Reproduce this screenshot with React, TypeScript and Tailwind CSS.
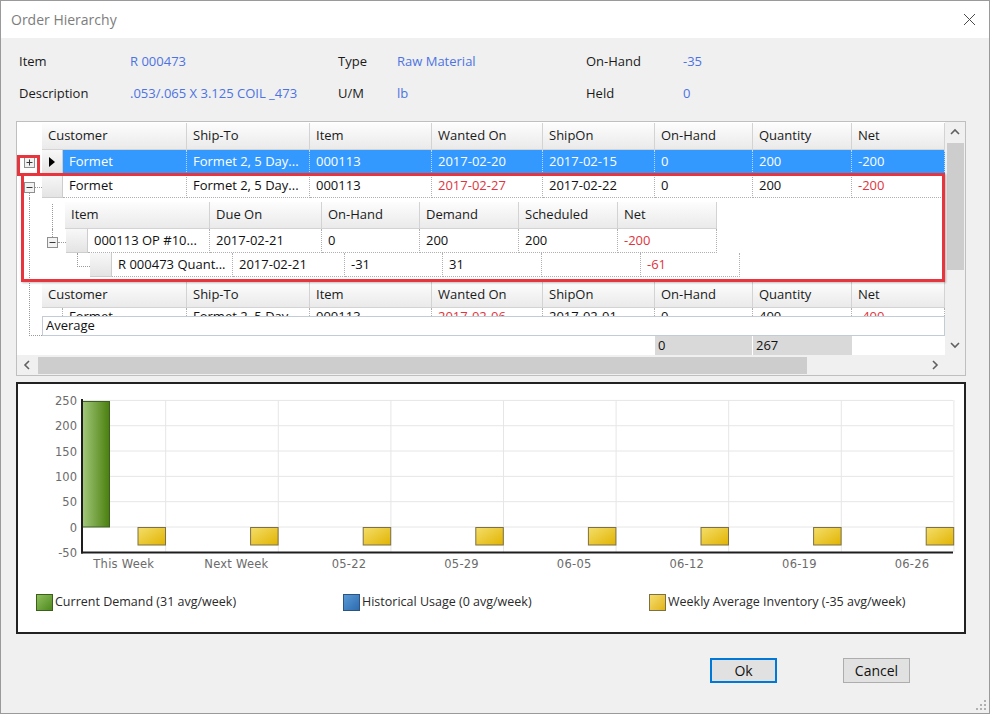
import React from "react";

const MAIN_W = ["w-[145px]", "w-[123px]", "w-[122px]", "w-[111px]", "w-[112px]", "w-[98px]", "w-[99px]", "w-[93px]"];
const DATA_W = ["w-[124px]", "w-[123px]", "w-[122px]", "w-[111px]", "w-[112px]", "w-[98px]", "w-[99px]", "w-[93px]"];
const MAIN_H = ["Customer", "Ship-To", "Item", "Wanted On", "ShipOn", "On-Hand", "Quantity", "Net"];
const CHILD_HW = ["w-[145px]", "w-[112px]", "w-[98px]", "w-[99px]", "w-[99px]", "w-[99px]"];
const CHILD_H = ["Item", "Due On", "On-Hand", "Demand", "Scheduled", "Net"];
const CHILD_W = ["w-[122px]", "w-[112px]", "w-[98px]", "w-[99px]", "w-[99px]", "w-[99px]"];
const GRAND_W = ["w-[121px]", "w-[112px]", "w-[98px]", "w-[99px]", "w-[99px]", "w-[99px]"];

type Cell = { t: string; red?: boolean };

const ROW1: Cell[] = [
  { t: "Formet" }, { t: "Formet 2, 5 Day..." }, { t: "000113" }, { t: "2017-02-20" },
  { t: "2017-02-15" }, { t: "0" }, { t: "200" }, { t: "-200" },
];
const ROW2: Cell[] = [
  { t: "Formet" }, { t: "Formet 2, 5 Day..." }, { t: "000113" }, { t: "2017-02-27", red: true },
  { t: "2017-02-22" }, { t: "0" }, { t: "200" }, { t: "-200", red: true },
];
const ROW3: Cell[] = [
  { t: "Formet" }, { t: "Formet 2, 5 Day..." }, { t: "000113" }, { t: "2017-02-06", red: true },
  { t: "2017-02-01" }, { t: "0" }, { t: "400" }, { t: "-400", red: true },
];
const CHILD: Cell[] = [
  { t: "000113 OP #10..." }, { t: "2017-02-21" }, { t: "0" }, { t: "200" }, { t: "200" }, { t: "-200", red: true },
];
const GRAND: Cell[] = [
  { t: "R 000473 Quant..." }, { t: "2017-02-21" }, { t: "-31" }, { t: "31" }, { t: "" }, { t: "-61", red: true },
];

function HCell({ w, children }: { w: string; children: React.ReactNode }) {
  return (
    <div
      className={`${w} shrink-0 h-full flex items-center pl-[6px] bg-linear-to-b from-[#fdfdfd] to-[#eaeaea] border-r border-b border-[#d3d3d3] whitespace-nowrap overflow-hidden text-[#1a1a1a]`}
    >
      {children}
    </div>
  );
}

function DCell({ w, c, sel }: { w: string; c: Cell; sel?: boolean }) {
  return (
    <div
      className={`${w} shrink-0 h-full flex items-center pl-[6px] border-r border-b border-dotted whitespace-nowrap overflow-hidden ${
        sel ? "border-[#b8dafc] text-white" : "border-[#b0b0b0]"
      } ${c.red ? "text-[#e0343c]" : ""}`}
    >
      {c.t}
    </div>
  );
}

function Indicator({ w, children }: { w: string; children?: React.ReactNode }) {
  return (
    <div
      className={`${w} shrink-0 h-full flex items-center justify-center bg-linear-to-b from-[#f8f8f8] to-[#e4e4e4] border-r border-b border-[#cdcdcd]`}
    >
      {children}
    </div>
  );
}

function Expander({ plus }: { plus?: boolean }) {
  return (
    <svg width="11" height="11" viewBox="0 0 11 11" className="block shrink-0">
      <rect x="0.5" y="0.5" width="10" height="10" fill="#f2f2f2" stroke="#8f8f8f" />
      <line x1="2.5" y1="5.5" x2="8.5" y2="5.5" stroke="#3a3a3a" />
      {plus && <line x1="5.5" y1="2.5" x2="5.5" y2="8.5" stroke="#3a3a3a" />}
    </svg>
  );
}

function Chev({ dir }: { dir: "up" | "down" | "left" | "right" }) {
  const pts: Record<string, string> = {
    up: "1,6 5,2 9,6",
    down: "1,2 5,6 9,2",
    left: "6,1 2,5 6,9",
    right: "2,1 6,5 2,9",
  };
  const vert = dir === "up" || dir === "down";
  return (
    <svg width={vert ? 10 : 8} height={vert ? 8 : 10} viewBox={vert ? "0 0 10 8" : "0 0 8 10"} className="block">
      <polyline points={pts[dir]} fill="none" stroke="#606060" strokeWidth="1.6" />
    </svg>
  );
}

function TitleBar() {
  return (
    <div className="h-[37px] shrink-0 bg-white flex items-center justify-between pl-[10px] pr-[13px]">
      <span className="text-[14px] text-[#7d7d7d]">Order Hierarchy</span>
      <svg width="13" height="13" viewBox="0 0 13 13" className="block">
        <line x1="1" y1="1" x2="12" y2="12" stroke="#4a4a4a" strokeWidth="1" />
        <line x1="12" y1="1" x2="1" y2="12" stroke="#4a4a4a" strokeWidth="1" />
      </svg>
    </div>
  );
}

function Info() {
  const blue = "text-[#4d73e3]";
  return (
    <div className="pt-[8px] pl-[18px] shrink-0 text-[#1a1a1a]">
      <div className="h-[32px] flex items-center">
        <span className="w-[111px]">Item</span>
        <span className={`w-[208px] ${blue}`}>R 000473</span>
        <span className="w-[59px]">Type</span>
        <span className={`w-[189px] ${blue}`}>Raw Material</span>
        <span className="w-[97px]">On-Hand</span>
        <span className={blue}>-35</span>
      </div>
      <div className="h-[32px] flex items-center">
        <span className="w-[111px]">Description</span>
        <span className={`w-[208px] ${blue}`}>.053/.065 X 3.125 COIL _473</span>
        <span className="w-[59px]">U/M</span>
        <span className={`w-[189px] ${blue}`}>lb</span>
        <span className="w-[97px]">Held</span>
        <span className={blue}>0</span>
      </div>
    </div>
  );
}

function Grid() {
  return (
    <div className="mt-[11px] ml-[15px] w-[950px] h-[255px] shrink-0 border border-[#bfbfbf] bg-white flex flex-col">
      <div className="flex h-[233px]">
        <div className="w-[928px] h-full flex flex-col overflow-hidden">
          {/* header */}
          <div className="flex h-[27px] mt-[1px] shrink-0">
            <div className="w-[25px] shrink-0" />
            {MAIN_H.map((h, i) => (
              <HCell key={h + i} w={MAIN_W[i]}>{h}</HCell>
            ))}
          </div>
          {/* row 1 selected */}
          <div className="flex h-[24px] shrink-0">
            <div className="w-[25px] shrink-0 flex items-center pl-[7px]">
              <Expander plus />
            </div>
            <Indicator w="w-[21px]">
              <svg width="6" height="10" viewBox="0 0 6 10" className="block">
                <polygon points="0,0 6,5 0,10" fill="#000" />
              </svg>
            </Indicator>
            <div className="flex h-full bg-[#3399ff]">
              {ROW1.map((c, i) => (
                <DCell key={i} w={DATA_W[i]} c={c} sel />
              ))}
            </div>
          </div>
          {/* row 2 */}
          <div className="flex h-[24px] shrink-0">
            <div className="w-[25px] shrink-0 flex flex-col">
              <div className="h-[8px]" />
              <div className="flex items-center pl-[7px]">
                <Expander />
                <div className="w-[7px] border-t border-dotted border-[#9a9a9a]" />
              </div>
              <div className="ml-[12px] flex-1 border-l border-dotted border-[#9a9a9a]" />
            </div>
            <Indicator w="w-[21px]" />
            {ROW2.map((c, i) => (
              <DCell key={i} w={DATA_W[i]} c={c} />
            ))}
          </div>
          {/* lower block */}
          <div className="flex flex-1">
            <div className="w-[25px] shrink-0">
              <div className="ml-[12px] w-[13px] h-[138px] border-l border-b border-dotted border-[#9a9a9a]" />
            </div>
            <div className="w-[903px] flex flex-col">
              {/* child band */}
              <div className="h-[84px] shrink-0 flex flex-col pt-[4px]">
                <div className="flex h-[27px] shrink-0">
                  <div className="w-[23px] shrink-0 flex flex-col">
                    <div className="ml-[10px] mt-[2px] flex-1 border-l border-dotted border-[#9a9a9a]" />
                  </div>
                  {CHILD_H.map((h, i) => (
                    <HCell key={h + i} w={CHILD_HW[i]}>{h}</HCell>
                  ))}
                </div>
                <div className="flex h-[24px] shrink-0">
                  <div className="w-[24px] shrink-0 flex flex-col">
                    <div className="ml-[10px] h-[8px] border-l border-dotted border-[#9a9a9a]" />
                    <div className="flex items-center pl-[5px]">
                      <Expander />
                      <div className="w-[8px] border-t border-dotted border-[#9a9a9a]" />
                    </div>
                  </div>
                  <Indicator w="w-[22px]" />
                  {CHILD.map((c, i) => (
                    <DCell key={i} w={CHILD_W[i]} c={c} />
                  ))}
                </div>
                <div className="flex h-[24px] shrink-0">
                  <div className="w-[48px] shrink-0">
                    <div className="ml-[35px] w-[13px] h-[14px] border-l border-b border-dotted border-[#9a9a9a]" />
                  </div>
                  <Indicator w="w-[22px]" />
                  {GRAND.map((c, i) => (
                    <DCell key={i} w={GRAND_W[i]} c={c} />
                  ))}
                </div>
              </div>
              {/* second header */}
              <div className="flex h-[26px] shrink-0">
                {MAIN_H.map((h, i) => (
                  <HCell key={h + i} w={MAIN_W[i]}>{h}</HCell>
                ))}
              </div>
              {/* partial row */}
              <div className="flex h-[8px] shrink-0 overflow-hidden items-start">
                <div className="w-[21px] shrink-0 h-[16px] border-r border-dotted border-[#b0b0b0]" />
                {ROW3.map((c, i) => (
                  <div
                    key={i}
                    className={`${DATA_W[i]} shrink-0 h-[16px] leading-[16px] pl-[6px] border-r border-dotted border-[#b0b0b0] whitespace-nowrap overflow-hidden ${
                      c.red ? "text-[#e0343c]" : ""
                    }`}
                  >
                    {c.t}
                  </div>
                ))}
              </div>
              {/* average */}
              <div className="h-[20px] shrink-0 border border-[#c3ccd6] flex items-center pl-[3px]">Average</div>
              {/* summary */}
              <div className="h-[19px] shrink-0 flex">
                <div className="w-[613px] shrink-0 h-full" />
                <div className="w-[98px] shrink-0 h-full bg-[#d9d9d9] border-r border-white flex items-center pl-[3px]">0</div>
                <div className="w-[99px] shrink-0 h-full bg-[#d9d9d9] flex items-center pl-[3px]">267</div>
                <div className="w-[93px] shrink-0 h-full" />
              </div>
            </div>
          </div>
        </div>
        {/* vertical scrollbar */}
        <div className="w-[20px] h-full bg-[#f0f0f0] flex flex-col items-center">
          <div className="h-[20px] flex items-center justify-center">
            <Chev dir="up" />
          </div>
          <div className="mt-[1px] w-[17px] h-[127px] bg-[#cdcdcd]" />
          <div className="flex-1" />
          <div className="h-[20px] flex items-center justify-center">
            <Chev dir="down" />
          </div>
        </div>
      </div>
      {/* horizontal scrollbar */}
      <div className="flex h-[20px]">
        <div className="w-[928px] h-full bg-[#f0f0f0] flex items-center">
          <div className="w-[20px] h-full flex items-center justify-center">
            <Chev dir="left" />
          </div>
          <div className="ml-[1px] w-[769px] h-[17px] bg-[#cdcdcd]" />
          <div className="flex-1" />
          <div className="w-[20px] h-full flex items-center justify-center">
            <Chev dir="right" />
          </div>
        </div>
        <div className="w-[20px] h-full bg-[#f0f0f0]" />
      </div>
    </div>
  );
}

const Y0 = 527;
const K = 0.5064;
const yv = (v: number) => Y0 - v * K;
const CATS = ["This Week", "Next Week", "05-22", "05-29", "06-05", "06-12", "06-19", "06-26"];
const STEP = 112.6;

function Chart() {
  const font = { fontFamily: "'DejaVu Sans', Verdana, sans-serif" };
  return (
    <div className="mt-[6px] ml-[15px] w-[950px] h-[252px] shrink-0 border-2 border-[#222] bg-white flex flex-col">
      <svg width="946" height="196" className="block shrink-0">
        <defs>
          <linearGradient id="gGreen" x1="0" y1="0" x2="1" y2="0">
            <stop offset="0" stopColor="#a4c97c" />
            <stop offset="1" stopColor="#4a7f0e" />
          </linearGradient>
          <linearGradient id="gYellow" x1="0" y1="0" x2="1" y2="1">
            <stop offset="0" stopColor="#f4de6a" />
            <stop offset="1" stopColor="#e2b400" />
          </linearGradient>
        </defs>
        <g transform="translate(-18,-384)">
          {[250, 200, 150, 100, 50, 0].map((v) => (
            <line key={v} x1={82} x2={953} y1={yv(v)} y2={yv(v)} stroke="#e6e6e6" strokeWidth="1" />
          ))}
          {CATS.map((_, i) => (
            <line key={i} x1={165.7 + i * STEP} x2={165.7 + i * STEP} y1={400} y2={552} stroke="#e6e6e6" strokeWidth="1" />
          ))}
          <rect x={82} y={401.5} width={27.5} height={125.5} fill="url(#gGreen)" stroke="#3f5f22" strokeWidth="1" />
          {CATS.map((_, i) => (
            <rect
              key={i}
              x={138 + i * STEP}
              y={527.5}
              width={27.5}
              height={17.5}
              fill="url(#gYellow)"
              stroke="#7d7045"
              strokeWidth="1"
            />
          ))}
          <line x1={82} x2={82} y1={399} y2={553.5} stroke="#1e1e1e" strokeWidth="2" />
          <line x1={81} x2={953} y1={552.5} y2={552.5} stroke="#1e1e1e" strokeWidth="2" />
          {[250, 200, 150, 100, 50, 0, -50].map((v) => (
            <text key={v} x={77} y={yv(v) + 4.5} textAnchor="end" fontSize="11.5" fill="#6b6b6b" style={font}>
              {v}
            </text>
          ))}
          {CATS.map((c, i) => (
            <text
              key={c}
              x={123.8 + i * STEP}
              y={567.5}
              textAnchor="middle"
              fontSize="11.5"
              letterSpacing="0.25"
              fill="#6b6b6b"
              style={font}
            >
              {c}
            </text>
          ))}
        </g>
      </svg>
      <div className="h-[44px] shrink-0 flex items-center pl-[18px] text-[12.5px] text-[#2a2a2a]">
        <div className="w-[307px] shrink-0 flex items-center">
          <div className="w-[17px] h-[17px] shrink-0 border border-[#3d5f1c] bg-linear-to-br from-[#8fbf5c] to-[#4e8a1a]" />
          <span className="ml-[2px]">Current Demand (31 avg/week)</span>
        </div>
        <div className="w-[306px] shrink-0 flex items-center">
          <div className="w-[17px] h-[17px] shrink-0 border border-[#2b5580] bg-linear-to-br from-[#5a9ad6] to-[#2c6cb0]" />
          <span className="ml-[2px]">Historical Usage (0 avg/week)</span>
        </div>
        <div className="flex items-center">
          <div className="w-[17px] h-[17px] shrink-0 border border-[#7d7045] bg-linear-to-br from-[#f4de6a] to-[#e2b400]" />
          <span className="ml-[2px]">Weekly Average Inventory (-35 avg/week)</span>
        </div>
      </div>
    </div>
  );
}

function Buttons() {
  return (
    <div className="mt-[24px] flex shrink-0 text-[14px] text-[#111]">
      <div className="ml-[709px] w-[67px] h-[25px] border-2 border-[#0078d7] bg-[#e1e1e1] flex items-center justify-center">
        Ok
      </div>
      <div className="ml-[66px] w-[67px] h-[25px] border border-[#adadad] bg-[#e1e1e1] flex items-center justify-center">
        Cancel
      </div>
    </div>
  );
}

export default function App() {
  return (
    <div className="relative w-[990px] h-[714px] overflow-hidden bg-[#f0f0f0] border border-[#9a9a9a] flex flex-col font-['Open_Sans','Noto_Sans',sans-serif] text-[13px] text-[#111]">
      <TitleBar />
      <Info />
      <Grid />
      <Chart />
      <Buttons />
      <div className="absolute left-[16px] top-[154px] w-[23px] h-[21px] border-[3px] border-[#e8343c]" />
      <div className="absolute left-[20px] top-[172px] w-[924px] h-[109px] border-[3px] border-[#e8343c] shadow-[1px_1px_2px_rgba(0,0,0,0.25)]" />
      <svg width="10" height="10" viewBox="0 0 10 10" className="absolute right-[3px] bottom-[3px]">
        {[
          [8, 0], [8, 4], [4, 4], [8, 8], [4, 8], [0, 8],
        ].map(([x, y], i) => (
          <rect key={i} x={x} y={y} width="2" height="2" fill="#b0b0b0" />
        ))}
      </svg>
    </div>
  );
}
